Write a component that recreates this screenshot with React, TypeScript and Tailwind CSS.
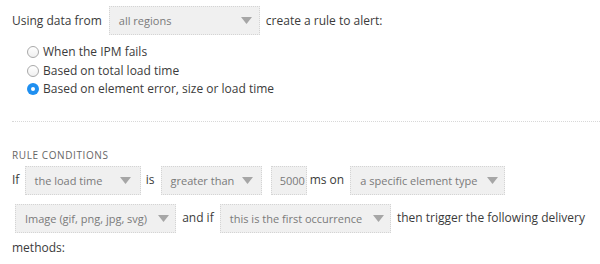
import React from "react";

type SelectProps = {
  label: string;
  width: string;
  arrowPad?: string;
  className?: string;
};

function Arrow() {
  return (
    <svg width="11" height="7" viewBox="0 0 11 7" className="shrink-0">
      <path d="M0 0 L11 0 L5.5 7 Z" fill="#a6a6a6" />
    </svg>
  );
}

function Select({ label, width, arrowPad = "pr-[8px]", className = "" }: SelectProps) {
  return (
    <span
      className={`inline-flex items-center justify-between gap-2 h-[29px] my-[4.5px] align-middle bg-[#f0f0f0] border border-dotted border-[#d4d4d4] pl-[9px] text-[11px] leading-[14px] text-[#7a7a7a] ${arrowPad} ${width} ${className}`}
    >
      <span className="whitespace-nowrap">{label}</span>
      <Arrow />
    </span>
  );
}

function Radio({ checked, label }: { checked?: boolean; label: string }) {
  return (
    <div className="flex items-center h-[18.5px]">
      {checked ? (
        <span className="w-[12px] h-[12px] rounded-full bg-[#1f8ff0] flex items-center justify-center">
          <span className="w-[4px] h-[4px] rounded-full bg-white" />
        </span>
      ) : (
        <span className="w-[12px] h-[12px] rounded-full border border-[#a9a9a9] bg-gradient-to-b from-white to-[#f0f0f0]" />
      )}
      <span className="ml-[4px]">{label}</span>
    </div>
  );
}

export default function App() {
  return (
    <div className="w-[600px] h-[264px] overflow-hidden bg-white text-[12px] text-[#3b3b3b] font-['Open_Sans',sans-serif]">
      <div className="flex items-center pl-3 pt-[6px]">
        <span>Using data from</span>
        <Select label="all regions" width="w-[151px]" arrowPad="pr-[7px]" className="ml-[7px] !my-0" />
        <span className="ml-[6px]">create a rule to alert:</span>
      </div>

      <div className="mt-[8px] pl-[27px]">
        <Radio label="When the IPM fails" />
        <Radio label="Based on total load time" />
        <Radio checked label="Based on element error, size or load time" />
      </div>

      <div className="ml-3 mt-[22px] border-t border-dotted border-[#d8d8d8]" />

      <div className="pl-3 mt-[26px] text-[10px] leading-[14px] tracking-[0.6px] text-[#666]">
        RULE CONDITIONS
      </div>

      <p className="pl-3 pr-3 leading-[20px]">
        <span>If</span>{" "}
        <Select label="the load time" width="w-[116px]" arrowPad="pr-[9px]" className="mx-[2px]" />{" "}
        <span>is</span>{" "}
        <Select label="greater than" width="w-[101px]" arrowPad="pr-[12px]" className="mx-[3px]" />{" "}
        <span className="inline-flex items-center h-[29px] my-[4.5px] align-middle bg-[#f0f0f0] border border-dotted border-[#d4d4d4] px-[8px] text-[11px] leading-[14px] text-[#7a7a7a] w-[36px] mx-[3px]">
          5000
        </span>
        <span>ms on</span>{" "}
        <Select label="a specific element type" width="w-[155px]" arrowPad="pr-[6px]" className="mx-[3px]" />{" "}
        <Select label="Image (gif, png, jpg, svg)" width="w-[161px]" arrowPad="pr-[6px]" className="mx-[3px]" />{" "}
        <span>and if</span>{" "}
        <Select label="this is the first occurrence" width="w-[171px]" arrowPad="pr-[6px]" className="mx-[3px]" />{" "}
        <span>then trigger the following delivery</span> <span>methods:</span>
      </p>
    </div>
  );
}
